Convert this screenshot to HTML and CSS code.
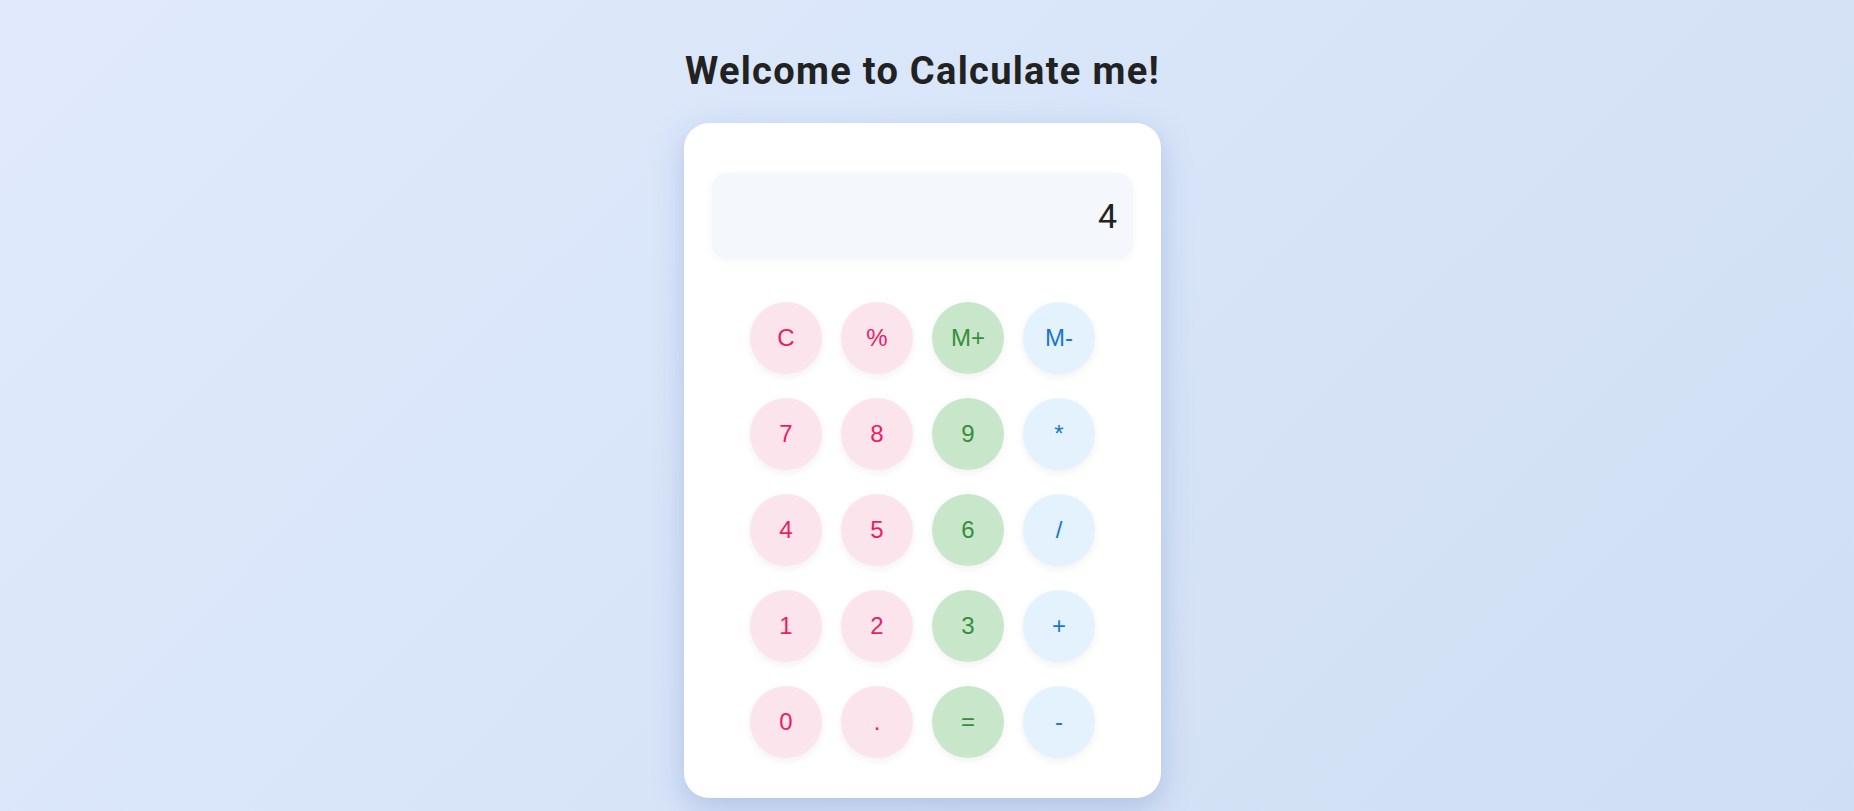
FILE: index.html
```html
<!DOCTYPE html>
<html lang="en">
<head>
<meta charset="utf-8">
<title>Calculate me</title>
<link rel="stylesheet" href="styles.css">
</head>
<body>
  <h1 class="title">Welcome to Calculate me!</h1>
  <div class="calculator">
    <div class="display">4</div>
    <div class="keypad">
      <button class="key pink">C</button>
      <button class="key pink">%</button>
      <button class="key green">M+</button>
      <button class="key blue">M-</button>
      <button class="key pink">7</button>
      <button class="key pink">8</button>
      <button class="key green">9</button>
      <button class="key blue">*</button>
      <button class="key pink">4</button>
      <button class="key pink">5</button>
      <button class="key green">6</button>
      <button class="key blue">/</button>
      <button class="key pink">1</button>
      <button class="key pink">2</button>
      <button class="key green">3</button>
      <button class="key blue">+</button>
      <button class="key pink">0</button>
      <button class="key pink">.</button>
      <button class="key green">=</button>
      <button class="key blue">-</button>
    </div>
  </div>
</body>
</html>
```
FILE: styles.css
```css
html, body {
  margin: 0;
  padding: 0;
}
body {
  min-height: 100vh;
  box-sizing: border-box;
  padding-right: 9px;
  background: linear-gradient(135deg, #e0eafc 0%, #cfdef3 100%);
  display: flex;
  flex-direction: column;
  align-items: center;
  font-family: Roboto, "Liberation Sans", sans-serif;
}
.title {
  margin: 49px 0 30px;
  font-size: 38px;
  line-height: 44px;
  font-weight: 700;
  letter-spacing: 1.3px;
  color: #222222;
}
.calculator {
  width: 421px;
  padding: 50px 28px 40px;
  background: #ffffff;
  border-radius: 25px;
  box-shadow: 0 10px 30px rgba(110, 135, 200, 0.35);
}
.display {
  height: 86px;
  box-sizing: border-box;
  padding: 0 16px;
  display: flex;
  align-items: center;
  justify-content: flex-end;
  background: #f4f7fb;
  border-radius: 15px;
  box-shadow: 0 2px 10px rgba(0, 0, 0, 0.04);
  font-family: Roboto, sans-serif;
  font-size: 34px;
  color: #222222;
}
.keypad {
  margin-top: 43px;
  display: grid;
  grid-template-columns: repeat(4, 72px);
  gap: 24px 19px;
  justify-content: center;
}
.key {
  width: 72px;
  height: 72px;
  border: none;
  border-radius: 50%;
  padding: 0;
  font-family: "Liberation Sans", Arial, sans-serif;
  font-size: 24px;
  box-shadow: 0 3px 8px rgba(0, 0, 0, 0.06);
  cursor: pointer;
}
.pink {
  background: #fce4ec;
  color: #e91e63;
}
.green {
  background: #c8e6c9;
  color: #388e3c;
}
.blue {
  background: #e3f2fd;
  color: #1976d2;
}
```
